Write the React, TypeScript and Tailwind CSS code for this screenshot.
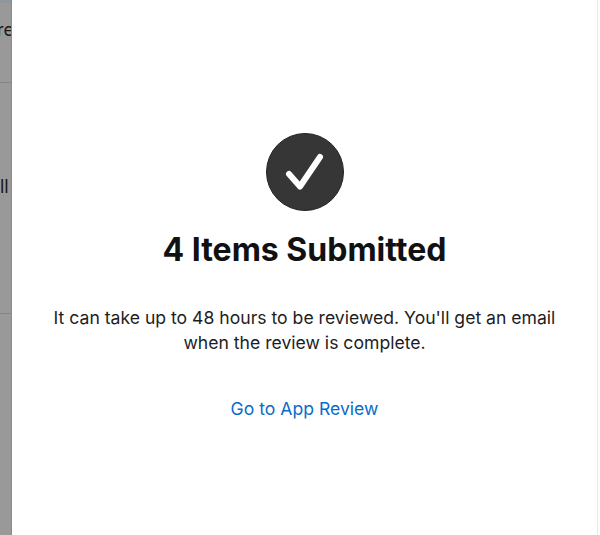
export default function App() {
  return (
    <div className="flex h-[535px] w-[600px] overflow-hidden bg-white font-['Inter',sans-serif]">
      {/* Dimmed page behind the sheet */}
      <div className="flex w-3 shrink-0 flex-col overflow-hidden border-r border-[#8a8a8a] bg-[#999999] text-[#1a1a1a]">
        <div className="h-[3px] shrink-0 bg-[#8f979e]" />
        <div className="flex h-[80px] shrink-0 items-center justify-end border-b border-[#858585] pb-[26px]">
          <span className="-mr-[3px] text-[18px] leading-none whitespace-nowrap">re</span>
        </div>
        <div className="flex h-[231px] shrink-0 items-center border-b border-[#858585] pb-[22px]">
          <span className="text-[18px] leading-none whitespace-nowrap">ll</span>
        </div>
      </div>

      {/* Sheet */}
      <div className="mr-[2px] flex min-w-0 flex-1 flex-col items-center border-r border-[#e8e8e8] pt-[133px]">
        <div className="flex h-[78px] w-[78px] items-center justify-center rounded-full border border-[#222222] bg-[#363636]">
          <svg width="40" height="40" viewBox="0 0 40 40" fill="none">
            <path d="M4 22 L15 34.5 L35 5" stroke="white" strokeWidth="6" strokeLinecap="round" strokeLinejoin="round" />
          </svg>
        </div>
        <h1 className="mt-[20px] text-[32px] leading-[38px] font-bold text-[#111111]">4 Items Submitted</h1>
        <p className="mt-[36px] w-[530px] text-center text-[17.6px] leading-[25px] text-[#1d1d1f]">
          It can take up to 48 hours to be reviewed. You'll get an email when the review is complete.
        </p>
        <a className="mt-[41px] text-[17.6px] leading-[26px] text-[#0a6bc9]">Go to App Review</a>
      </div>
    </div>
  )
}
